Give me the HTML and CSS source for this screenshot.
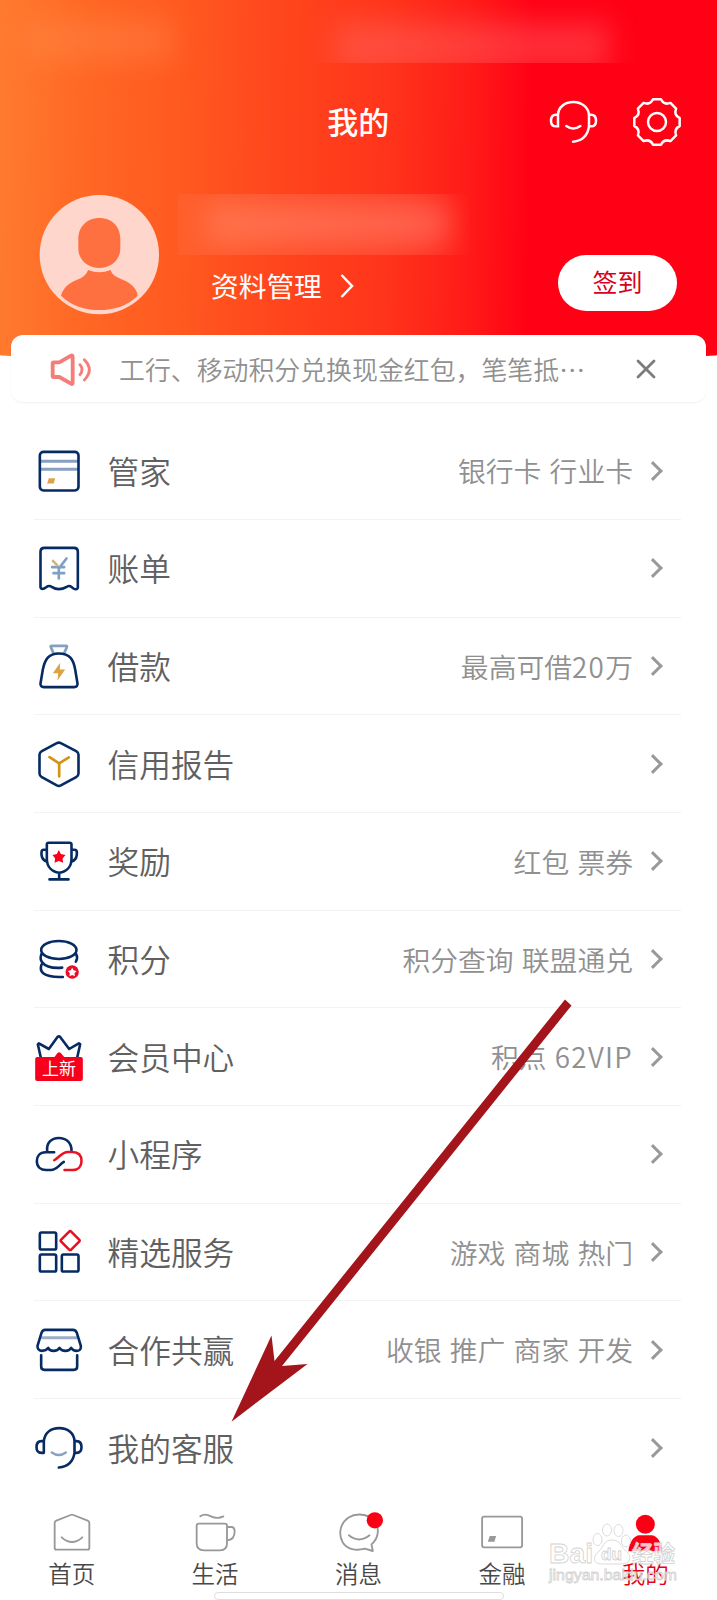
FILE: index.html
```html
<!DOCTYPE html>
<html lang="zh-CN">
<head>
<meta charset="utf-8">
<title>我的</title>
<link rel="stylesheet" href="styles.css">
</head>
<body>
<div class="app">
  <header class="header">
    <div class="smudge smudge-time"></div>
    <div class="smudge-clip clip-status"><div class="smudge smudge-status"></div></div>
    <div class="topbar">
      <h1 class="title">我的</h1>
      <div class="actions">
        <svg class="action" viewBox="58 50 150 150"><g fill="none" stroke="#fff" stroke-width="7.500" stroke-linecap="round"><path d="M85 103V138H79Q64 138 64 121Q64 103 79 103H85C86 80 106 65 131 65C158 65 177 83 178 105V137"/><path d="M178 103H184Q199 103 199 121Q199 138 184 138H178Q172 180 130 184"/><path d="M110 137Q131 152 152 137"/></g></svg>
        <svg class="action" viewBox="307 50 150 150"><g fill="none" stroke="#fff" stroke-width="7.500" stroke-linejoin="round" transform="translate(382 125)"><path d="M-12-68H12Q20.700-49.900 40.300-57.300L57.300-40.300Q49.900-20.700 68-12V12Q49.900 20.700 57.300 40.300L40.300 57.300Q20.700 49.900 12 68H-12Q-20.700 49.900-40.300 57.300L-57.300 40.300Q-49.900 20.700-68 12V-12Q-49.900-20.700-57.300-40.300L-40.300-57.300Q-20.700-49.900-12-68Z"/><circle r="27"/></g></svg>
      </div>
    </div>
    <div class="profile">
      <svg class="avatar" viewBox="117 43 363 363"><circle cx="298" cy="225" r="179" fill="#ffd6cb"/><path fill="#ff7040" d="M298 115C335 115 361 140 361 178V206C361 242 332 265 298 265C264 265 235 242 235 206V178C235 140 262 115 298 115ZM264 271Q298 285 332 271C338 290 352 292 372 302C398 314 411 330 413 348C380 380 342 391 298 391C254 391 214 379 183 348C190 325 205 312 228 302C246 294 258 288 264 271Z"/></svg>
      <div class="profile-info">
        <div class="smudge-clip clip-name"><div class="smudge smudge-name"></div></div>
        <div class="manage">资料管理<svg class="manage-arrow" viewBox="0 0 16 26"><path d="M2.500 2L13 13L2.500 24" fill="none" stroke="#fff" stroke-width="2.500"/></svg></div>
      </div>
      <div class="signin">签到</div>
    </div>
  </header>

  <section class="notice">
    <svg class="speaker" viewBox="138 504 150 120"><g fill="none" stroke="#f47d7a" stroke-linejoin="round" stroke-linecap="round"><path stroke-width="11.500" d="M158 547Q158 544 161 544H178L213 524Q218 521 218 528V605Q218 611 213 608L178 588H161Q158 588 158 585Z"/><path d="M240 551Q252 566 240 581M253 536Q283 566 253 597" stroke-width="8.500"/></g></svg>
    <span class="notice-text">工行、移动积分兑换现金红包，笔笔抵…</span>
    <svg class="close" viewBox="0 0 20 20"><path d="M2 2L18 18M18 2L2 18" stroke="#7c7c7c" stroke-width="2.800" stroke-linecap="round"/></svg>
  </section>

  <main class="menu">
    <div class="row"><svg class="icon" viewBox="43.500 30.500 150 180"><path d="M62 91H176M62 115H176" stroke="#879fc0" stroke-width="9"/><path d="M88 142H107L103 158H83Z" fill="#dca448"/><rect x="61" y="63" width="116" height="116" rx="11" class="navy"/></svg><span class="label">管家</span><span class="value">银行卡 行业卡</span><i class="chev"></i></div>
    <div class="row"><svg class="icon" viewBox="43.500 323.500 150 180"><path class="navy" d="M63 472V365Q63 353 75 353H163Q175 353 175 365V472Q172 481 162 475L157 471Q148 464 140 471Q130 477 118 477Q107 477 98 471Q89 464 80 471Q67 481 63 472Z"/><path d="M141 385L118 415V445M98 411H134M102 429H134" fill="none" stroke="#7f9fc5" stroke-width="8" stroke-linecap="round"/><path d="M98 390L115 407" stroke="#d6b479" stroke-width="8"/></svg><span class="label">账单</span><i class="chev"></i></div>
    <div class="row"><svg class="icon" viewBox="43.500 616.600 150 180"><path d="M102 668L94 650Q92 646 97 646H139Q144 646 142 650L134 668" fill="none" stroke="#879fc0" stroke-width="8"/><path class="navy" d="M118 669C152 669 162 689 167 717L174 759Q175 770 164 770H73Q62 770 63 759L70 717C76 689 86 669 118 669Z"/><path fill="#dda342" d="M122 697L100 728H116L114 750L137 717H121Z"/></svg><span class="label">借款</span><span class="value">最高可借<b class="latin">20</b>万</span><i class="chev"></i></div>
    <div class="row"><svg class="icon" viewBox="43.500 39.700 150 180"><path class="navy" d="M112 67Q118 64 124 67L170 91Q177 95 177 102V158Q177 165 170 169L124 194Q118 197 112 194L67 169Q60 165 60 158V102Q60 95 67 91Z"/><path d="M90 109L119 128L148 110M119 128V167" fill="none" stroke="#d49317" stroke-width="8" stroke-linecap="round"/></svg><span class="label">信用报告</span><i class="chev"></i></div>
    <div class="row"><svg class="icon" viewBox="43.500 332.800 150 180"><path class="navy" d="M87 368H150Q156 368 156 374V416C156 440 141 455 119 458C97 455 82 440 82 416V374Q82 368 87 368ZM82 389H73Q66 389 66 397V404Q68 421 83 425M156 389H165Q172 389 172 397V404Q170 421 155 425M119 459V477M90 478H147"/><path fill="#fb0018" d="M118 390L124 402L138 405L129 415L131 428L118 423L105 428L107 415L99 405L112 402Z"/></svg><span class="label">奖励</span><span class="value">红包 票券</span><i class="chev"></i></div>
    <div class="row"><svg class="icon" viewBox="43.500 626 150 180"><g class="navy"><ellipse cx="118" cy="689" rx="53" ry="27"/><path d="M66 701Q60 716 68 726C80 741 104 744 128 742M170 701Q176 713 169 724M66 733Q60 749 71 759C84 769 106 771 130 770"/></g><circle cx="158" cy="755" r="20" fill="#ec0b28"/><path fill="#fff" d="M158 742L162 750L171 752L165 759L166 768L158 764L150 768L151 759L145 752L154 750Z"/></svg><span class="label">积分</span><span class="value">积分查询 联盟通兑</span><i class="chev"></i></div>
    <div class="row"><svg class="icon" viewBox="43.500 49 150 180"><path class="navy" d="M66 150L55 101L58 98L88 115L114 79Q118 75 122 79L149 115L178 98L182 101L171 150"/><path fill="#f8001b" d="M53 139H105L114 127Q119 123 124 127L134 139H184Q190 139 190 145V205Q190 211 184 211H53Q47 211 47 205V145Q47 139 53 139Z"/><text class="badge" x="118.500" y="193" text-anchor="middle">上新</text></svg><span class="label">会员中心</span><span class="value">积点 <b class="latin">62VIP</b></span><i class="chev"></i></div>
    <div class="row"><svg class="icon" viewBox="43.500 342.200 150 180"><path class="navy" d="M83 424C80 399 96 384 118 384C139 384 156 397 156 422M104 427H78C61 427 52 438 52 454C52 471 64 480 80 480H94C112 480 118 465 133 456"/><path d="M104 451C119 443 127 426 145 426H158C176 426 186 436 186 453C186 470 176 480 160 480H135" fill="none" stroke="#ec1020" stroke-width="7.500" stroke-linecap="round"/></svg><span class="label">小程序</span><i class="chev"></i></div>
    <div class="row"><svg class="icon" viewBox="43.500 635.300 150 180"><g class="navy"><rect x="61" y="667" width="49" height="51" rx="5"/><rect x="61" y="733" width="49" height="51" rx="5"/><rect x="127" y="733" width="50" height="51" rx="5"/></g><path d="M149 664Q152 661 155 664L179 688Q182 691 179 694L155 718Q152 721 149 718L125 694Q122 691 125 688Z" fill="none" stroke="#e80c1c" stroke-width="7.500"/></svg><span class="label">精选服务</span><span class="value">游戏 商城 热门</span><i class="chev"></i></div>
    <div class="row"><svg class="icon" viewBox="43.500 58.400 150 180"><path d="M65 112H173" stroke="#9badc8" stroke-width="9"/><path class="navy" d="M77 88H160Q169 88 172 97L184 136Q186 150 172 151Q160 151 155 142Q150 151 138 151Q125 151 120 142Q115 151 102 151Q90 151 86 142Q80 151 67 151Q53 149 54 136L66 97Q69 88 77 88ZM65 164V198Q65 208 75 208H163Q173 208 173 198V164"/></svg><span class="label">合作共赢</span><span class="value">收银 推广 商家 开发</span><i class="chev"></i></div>
    <div class="row"><svg class="icon" viewBox="43.500 351.500 150 180"><path class="navy" d="M73 421V456H66Q51 456 51 439Q51 421 66 421H73C76 396 94 382 119 382C146 382 164 398 165 421V454M165 421H171Q186 421 186 439Q186 456 171 456H165Q159 496 118 500"/><path d="M97 455Q118 470 139 455" fill="none" stroke="#8ba1c1" stroke-width="7.500" stroke-linecap="round"/></svg><span class="label">我的客服</span><i class="chev"></i></div>
  </main>

  <nav class="tabs">
    <div class="tab"><svg class="tab-icon" viewBox="140 51 150 150"><path class="line" d="M163 99Q163 94 168 92L211 75Q215 73 219 75L262 92Q267 94 267 99V174Q267 179 262 179H168Q163 179 163 174ZM184 142Q215 170 246 142"/></svg>首页</div>
    <div class="tab"><svg class="tab-icon" viewBox="570 51 150 150"><path class="line" d="M596 101H674Q681 101 681 108V160Q681 181 660 181H612Q590 181 590 160V108Q590 101 596 101ZM681 111H693Q704 111 704 124Q704 150 681 151M601 79Q614 69 633 79Q652 88 670 79"/></svg>生活</div>
    <div class="tab"><svg class="tab-icon" viewBox="40.500 51 150 150"><path class="line" d="M153 163L157 183L133 176C108 183 79 179 66 156C53 131 59 100 83 83C112 65 153 74 167 100C177 121 172 147 153 163ZM85 136Q116 161 147 136"/><circle cx="163" cy="91" r="24.500" fill="#fb0015"/></svg>消息</div>
    <div class="tab"><svg class="tab-icon" viewBox="350.700 51 150 150"><rect class="line" x="366" y="80" width="120" height="92" rx="6"/><path fill="#999" d="M389 138H408L403 155H383Z"/></svg>金融</div>
    <div class="tab tab-active"><svg class="tab-icon" viewBox="781 51 150 150"><g fill="#fb0015"><circle cx="857" cy="103" r="28.500"/><path d="M806 184C809 155 825 136 839 136H875C891 136 905 155 908 184Z"/></g></svg>我的</div>
  </nav>
  <div class="home-pill"></div>

  <svg class="overlay" viewBox="0 0 717 1600">
    <path fill="#a4141b" d="M565 999.500L571.500 1005.500L282 1366L307.500 1364L231.500 1421.700L271.500 1335.500L274.500 1361Z"/>
    <g class="mark">
      <ellipse cx="597.500" cy="1539.500" rx="4.500" ry="6"/><ellipse cx="607" cy="1530" rx="4.500" ry="6"/><ellipse cx="618.500" cy="1530.500" rx="4.500" ry="6"/><ellipse cx="626" cy="1541" rx="4.500" ry="6"/>
      <path d="M612 1540C603 1540 604 1548 598 1552C592 1558 594 1564 601 1564H621C630 1564 633 1557 626 1551C620 1547 621 1540 612 1540Z"/>
      <text x="549" y="1563" font-size="28" textLength="44" lengthAdjust="spacingAndGlyphs">Bai</text>
      <text x="601" y="1560" font-size="17" textLength="21" lengthAdjust="spacingAndGlyphs">du</text>
      <text x="632" y="1562" font-size="22.500" textLength="43" lengthAdjust="spacingAndGlyphs">经验</text>
      <text class="mark-url" x="549" y="1580" font-size="15.500" textLength="128" lengthAdjust="spacingAndGlyphs">jingyan.baidu.com</text>
    </g>
  </svg>
</div>
</body>
</html>
```

FILE: styles.css
```css
* { box-sizing: border-box; }

body {
  margin: 0;
  background: #fff;
  font-family: "Noto Sans CJK SC", sans-serif;
  font-weight: 350;
}

.app {
  position: relative;
  width: 717px;
  height: 1600px;
  overflow: hidden;
}

.header {
  position: relative;
  height: 359px;
  overflow: hidden;
  background: linear-gradient(91deg, #ff7b2e 0, #ff6725 90px, #ff5a20 180px, #ff461d 280px, #ff341b 390px, #ff1c18 470px, #ff0616 522px, #ff0014 535px);
  border-radius: 0 0 50% 50% / 0 0 4px 4px;
}

.topbar {
  display: grid;
  grid-template-columns: 1fr auto 1fr;
  align-items: center;
  height: 50px;
  margin-top: 96.7px;
  padding: 0 34.700px 0 0;
}

.title {
  grid-column: 2;
  margin: -2px -17px 0 17px;
  color: #fff;
  font-size: 31px;
  font-weight: 500;
  line-height: 50px;
}

.actions {
  display: flex;
  justify-content: flex-end;
  gap: 33px;
}

.action { width: 50px; height: 50px; }

.profile {
  display: flex;
  margin-top: 47.6px;
  padding: 0 40px 0 39px;
}

.avatar { width: 121px; height: 121px; flex: none; }

.profile-info { flex: 1; padding-left: 18px; }

.manage {
  display: flex;
  align-items: center;
  margin-top: 9px;
  padding-left: 33px;
  height: 42px;
  color: #fff;
  font-size: 27.700px;
  font-weight: 400;
  line-height: 42px;
}

.manage-arrow { width: 16px; height: 26px; margin: 2px 0 0 17px; }

.signin {
  width: 119px;
  height: 56px;
  margin-top: 60.7px;
  border-radius: 28px;
  background: #fff;
  color: #d80020;
  font-size: 25px;
  font-weight: 400;
  line-height: 53px;
  text-align: center;
}

.smudge { filter: blur(14px); background: rgba(255, 150, 125, .42); }
.smudge-clip { overflow: hidden; }

.smudge-time {
  position: absolute;
  left: 25px;
  top: 20px;
  width: 148px;
  height: 40px;
  background: rgba(255, 150, 90, .3);
}

.clip-status { position: absolute; left: 300px; top: 0; width: 340px; height: 63px; }
.smudge-status { height: 50px; margin: 22px 30px 0 35px; background: rgba(255, 110, 110, .4); }
.clip-name {
  width: 292px;
  height: 61px;
  background: linear-gradient(90deg, rgba(255, 140, 120, .13) 80%, rgba(255, 140, 120, 0));
}
.smudge-name { height: 44px; margin: 8px 20px 0 28px; }

.notice {
  position: relative;
  display: flex;
  align-items: center;
  width: 695px;
  height: 67px;
  margin: -24px 0 0 11px;
  padding: 0 50px 0 35px;
  border-radius: 12px;
  background: #fff;
  box-shadow: 0 1px 2px rgba(0, 0, 0, .06);
}

.speaker { width: 50px; height: 40px; }

.notice-text {
  flex: 1;
  margin-left: 23px;
  color: #909090;
  font-size: 25.900px;
  line-height: 40px;
  white-space: nowrap;
}

.close { width: 20px; height: 20px; }

.menu { padding: 20.300px 36px 0 34px; }

.row {
  display: flex;
  align-items: center;
  height: 97.7px;
  border-bottom: 1.500px solid #f3f3f3;
}

.row:last-child { border-bottom: 0; }

.icon { width: 50px; height: 60px; }

.navy {
  fill: none;
  stroke: #062a63;
  stroke-width: 7.8;
  stroke-linecap: round;
  stroke-linejoin: round;
}

.badge { fill: #fff; font-size: 51px; font-weight: 400; }

.label {
  flex: 1;
  margin: -2px 0 0 23.5px;
  color: #606060;
  font-size: 31.700px;
  line-height: 46px;
}

.value {
  margin-top: -1px;
  color: #909090;
  font-size: 27.800px;
  line-height: 40px;
  word-spacing: 2px;
}

.latin { font-weight: inherit; letter-spacing: 1.3px; }

.chev {
  width: 14px;
  height: 14px;
  margin: 0 21px 0 13px;
  border-top: 3px solid #999;
  border-right: 3px solid #999;
  transform: rotate(45deg);
}

.tabs {
  display: flex;
  height: 95px;
  padding-top: 10px;
}

.tab {
  flex: 1;
  display: flex;
  flex-direction: column;
  align-items: center;
  color: #484848;
  font-size: 23.500px;
  line-height: 33px;
}

.tab-active { color: #e5001b; }
.tab-icon { width: 50px; height: 50px; }

.line {
  fill: none;
  stroke: #989898;
  stroke-width: 5.5;
  stroke-linecap: round;
  stroke-linejoin: round;
}

.home-pill {
  width: 290px;
  height: 8px;
  margin: 0 auto;
  border: 1px solid #dedede;
  border-radius: 4px;
  background: #fff;
}

.overlay {
  position: absolute;
  left: 0;
  top: 0;
  width: 717px;
  height: 1600px;
}

.mark {
  fill: #fff;
  fill-opacity: .8;
  stroke: #d2d2d2;
  stroke-width: .8;
  font-family: "Liberation Sans", "Noto Sans CJK SC", sans-serif;
  font-weight: 700;
}

.mark-url { font-weight: 400; fill-opacity: .5; }
```
